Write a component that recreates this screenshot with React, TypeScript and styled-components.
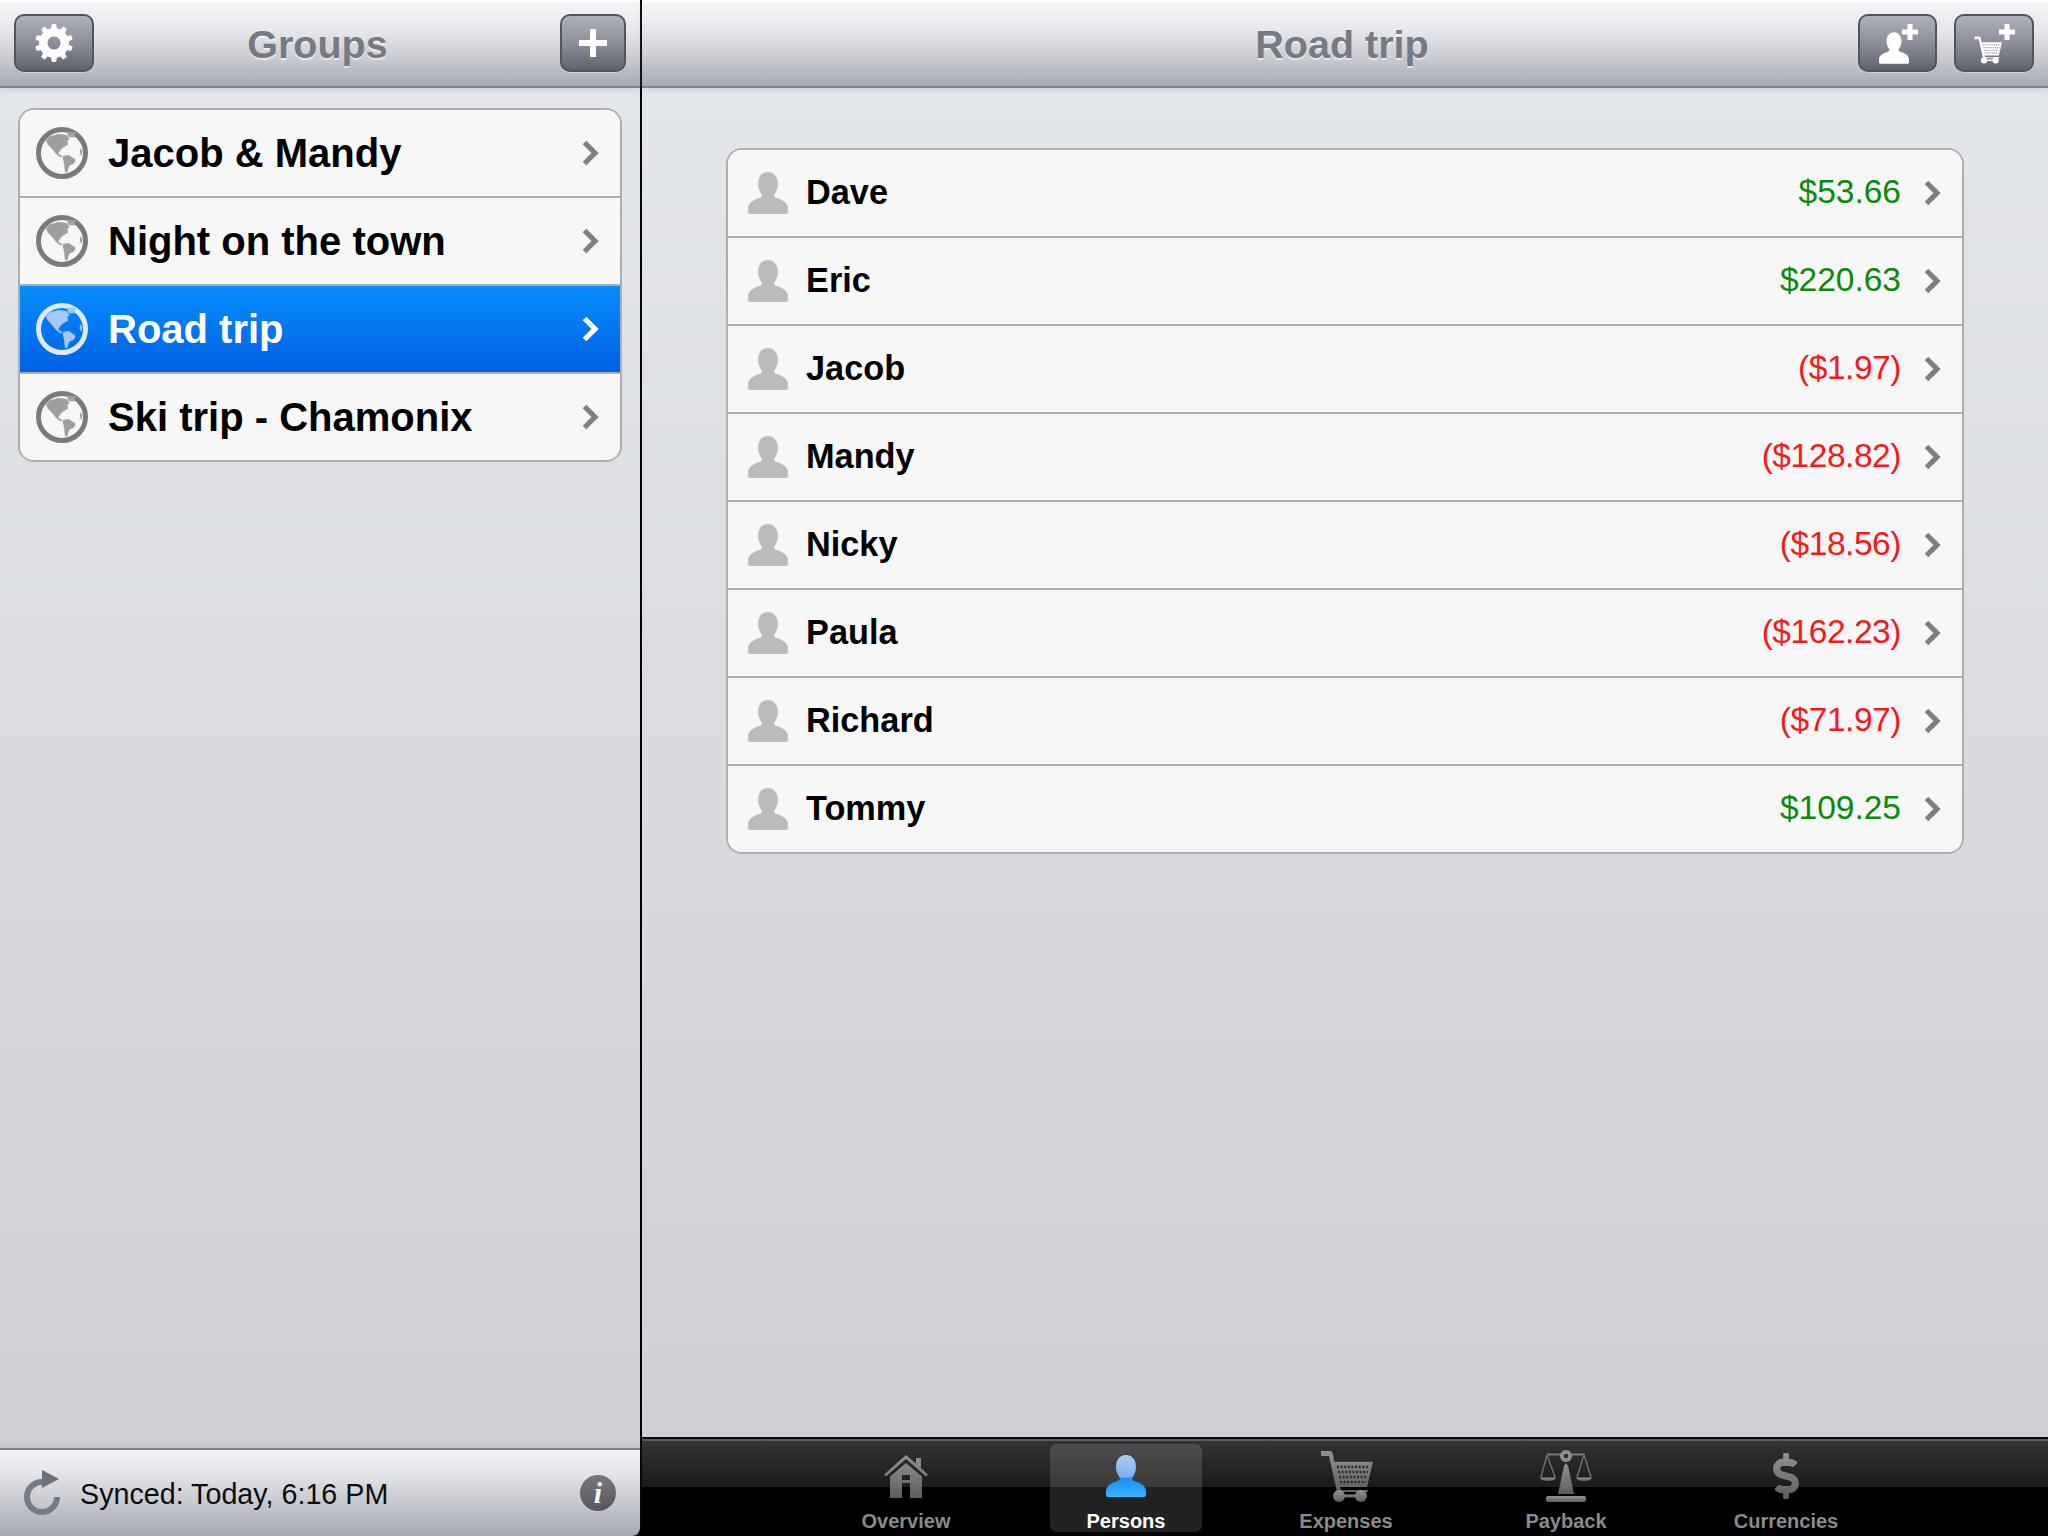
import { FC, ReactNode } from "react";
import styled, { createGlobalStyle } from "styled-components";
import { FaDollarSign } from "react-icons/fa";

const GlobalStyle = createGlobalStyle`
  html, body {
    margin: 0;
    padding: 0;
    background: #000;
  }
  * {
    box-sizing: border-box;
  }
`;

const groups = ["Jacob & Mandy", "Night on the town", "Road trip", "Ski trip - Chamonix"];

const persons = [
  { name: "Dave", amount: "$53.66", owes: false },
  { name: "Eric", amount: "$220.63", owes: false },
  { name: "Jacob", amount: "($1.97)", owes: true },
  { name: "Mandy", amount: "($128.82)", owes: true },
  { name: "Nicky", amount: "($18.56)", owes: true },
  { name: "Paula", amount: "($162.23)", owes: true },
  { name: "Richard", amount: "($71.97)", owes: true },
  { name: "Tommy", amount: "$109.25", owes: false },
];

const personPath =
  "M20 0C27 0 30 6 30 12C30 17 28 20 26 23C26 25 28 26 31 27C37 29 40 32 40 37V40Q40 42 38 42H2Q0 42 0 40V37C0 32 3 29 9 27C12 26 14 25 14 23C12 20 10 17 10 12C10 6 13 0 20 0Z";

// gear outline, ten teeth round a punched hole
const gearPath = (() => {
  const teeth = 10;
  const pts: string[] = [];
  for (let i = 0; i < teeth; i++) {
    const a = (i / teeth) * Math.PI * 2;
    const w = Math.PI / teeth;
    [
      [15, a - w * 0.62],
      [19, a - w * 0.36],
      [19, a + w * 0.36],
      [15, a + w * 0.62],
    ].forEach(([r, t]) => {
      pts.push(`${(19 + r * Math.sin(t)).toFixed(2)} ${(19 - r * Math.cos(t)).toFixed(2)}`);
    });
  }
  return `M${pts.join("L")}ZM19 12.5a6.5 6.5 0 1 0 0.01 0Z`;
})();

const Screen = styled.div`
  position: relative;
  display: flex;
  width: 2048px;
  height: 1536px;
  overflow: hidden;
  background: #000;
  font-family: "Liberation Sans", Arial, sans-serif;
  -webkit-font-smoothing: antialiased;
`;

const Sidebar = styled.aside`
  display: flex;
  flex-direction: column;
  width: 640px;
  height: 100%;
  flex: none;
`;

const Divider = styled.div`
  width: 2px;
  flex: none;
  background: #000;
`;

const Notch = styled.div`
  position: absolute;
  top: 0;
  left: 637px;
  border-left: 4px solid transparent;
  border-right: 4px solid transparent;
  border-top: 4px solid #000;
`;

const Main = styled.main`
  display: flex;
  flex-direction: column;
  flex: 1;
  height: 100%;
`;

const NavBar = styled.header<{ $left: number }>`
  position: relative;
  z-index: 1;
  display: grid;
  grid-template-columns: 1fr auto 1fr;
  align-items: center;
  height: 88px;
  flex: none;
  padding: 12px 14px 14px ${(p) => p.$left}px;
  border-top: 2px solid #fff;
  border-bottom: 2px solid #7c8090;
  background: linear-gradient(#f5f6f8, #e6e7eb 35%, #c6c8cf 70%, #a7aab5);
  box-shadow: 0 2px 5px rgba(130, 135, 150, 0.22);
`;

const NavTitle = styled.h1<{ $pull?: number }>`
  margin: 2px ${(p) => p.$pull ?? 0}px 0 0;
  font-size: 39.5px;
  line-height: 44px;
  font-weight: 700;
  color: #757a84;
  text-shadow: 0 2px 0 rgba(255, 255, 255, 0.55);
`;

const ButtonGroup = styled.div<{ $end?: boolean }>`
  display: flex;
  gap: 17px;
  justify-content: ${(p) => (p.$end ? "flex-end" : "flex-start")};
`;

const NavButton = styled.button<{ $width: number }>`
  position: relative;
  display: flex;
  align-items: center;
  justify-content: center;
  width: ${(p) => p.$width}px;
  height: 58px;
  padding: 0;
  border: 2px solid #52555e;
  border-radius: 10px;
  background: linear-gradient(#aeb1ba, #8c8f99 50%, #5f636e);
  box-shadow: 0 1px 0 rgba(255, 255, 255, 0.35);
`;

const ButtonGlyph = styled.span<{ $right: number; $top: number }>`
  display: flex;
  margin: ${(p) => p.$top}px ${(p) => p.$right}px 0 0;
`;

const CornerPlus = styled.svg`
  position: absolute;
  top: 8px;
  right: 17px;
`;

const PaneBody = styled.section<{ $padding: string }>`
  flex: 1;
  min-height: 0;
  padding: ${(p) => p.$padding};
  background: linear-gradient(#e3e6eb, #cfd0d5);
`;

const List = styled.ul`
  margin: 0;
  padding: 0;
  list-style: none;
  overflow: hidden;
  border: 2px solid #aeaeae;
  border-radius: 16px;
  background: #f7f7f7;
`;

const Row = styled.li<{ $selected?: boolean; $gap: number; $pad: number }>`
  display: flex;
  align-items: center;
  gap: ${(p) => p.$gap}px;
  height: 88px;
  padding: 0 21px 0 ${(p) => p.$pad}px;
  border-top: 2px solid #aeaeae;
  color: ${(p) => (p.$selected ? "#fff" : "#000")};
  background: ${(p) => (p.$selected ? "linear-gradient(#058df9, #0160e6)" : "#f7f7f7")};

  &:first-child {
    height: 86px;
    border-top: 0;
  }
`;

const GroupName = styled.span`
  flex: 1;
  font-size: 40px;
  line-height: 46px;
  font-weight: 700;
`;

const PersonName = styled.span`
  flex: 1;
  font-size: 34.3px;
  line-height: 40px;
  font-weight: 700;
  margin-top: -3px;
`;

const Amount = styled.span<{ $owes: boolean }>`
  margin-right: 5px;
  font-size: 33.5px;
  line-height: 40px;
  margin-top: -2px;
  letter-spacing: ${(p) => (p.$owes ? "-0.45px" : "0")};
  color: ${(p) => (p.$owes ? "#f5181c" : "#0a8a0a")};
`;

const SyncBar = styled.footer`
  position: relative;
  display: flex;
  align-items: center;
  gap: 20px;
  height: 88px;
  flex: none;
  padding: 0 24px;
  border-top: 2px solid #797d8e;
  border-bottom-right-radius: 8px;
  background: linear-gradient(#f1f2f6, #e2e3e8 30%, #a6a9b4);
  box-shadow: 0 -3px 4px rgba(120, 125, 140, 0.18);
`;

const SyncText = styled.span`
  flex: 1;
  font-size: 28.7px;
  line-height: 36px;
  margin-top: 2px;
  color: #0c0c0c;
`;

const InfoBadge = styled.span`
  display: flex;
  align-items: center;
  justify-content: center;
  width: 36px;
  height: 36px;
  border-radius: 50%;
  background: linear-gradient(#77797e, #55575c);
  color: #f4f4f4;
  font-family: "Liberation Serif", "Times New Roman", serif;
  font-style: italic;
  font-weight: 700;
  font-size: 30px;
  line-height: 36px;
`;

const TabBar = styled.nav`
  display: flex;
  justify-content: center;
  gap: 68px;
  height: 99px;
  flex: none;
  padding: 3px 0 0 2px;
  border-top: 2px solid #0b0b0b;
  background: linear-gradient(#5c5c5c 0, #5c5c5c 2px, #333 2px, #1b1b1b 48px, #000 48px);
`;

const Tab = styled.div<{ $active?: boolean }>`
  display: flex;
  flex-direction: column;
  align-items: center;
  width: 152px;
  height: 88px;
  margin-top: 2px;
  border-radius: 7px;
  background: ${(p) => (p.$active ? "rgba(255, 255, 255, 0.135)" : "transparent")};
  color: ${(p) => (p.$active ? "#fff" : "#8a8a8a")};
`;

const TabIconSlot = styled.div`
  display: flex;
  align-items: center;
  justify-content: center;
  height: 64px;
  margin-bottom: 2px;
`;

const TabLabel = styled.span`
  font-size: 20px;
  line-height: 22px;
  font-weight: 700;
  white-space: nowrap;
`;

const HiddenDefs = styled.svg`
  position: absolute;
  width: 0;
  height: 0;
`;

const Chevron: FC<{ color: string }> = ({ color }) => (
  <svg width="17" height="26" viewBox="0 0 17 26">
    <polyline points="2.5,2.5 13,13 2.5,23.5" fill="none" stroke={color} strokeWidth="5.2" />
  </svg>
);

const Globe: FC<{ selected?: boolean }> = ({ selected }) => {
  const ring = selected ? "#dfe8f5" : "#7a7b7f";
  const land = selected ? "#a3caf6" : "#9e9e9e";
  return (
    <svg width="52" height="52" viewBox="0 0 52 52" style={{ flex: "none" }}>
      <circle cx="26" cy="26" r="23.5" fill="none" stroke={ring} strokeWidth="5" />
      <g fill={land} stroke={land} strokeWidth="0.5" strokeLinejoin="round">
        <polygon points="10,13.3 14.3,9.3 22.7,7.3 31,8.3 33.3,11.7 31,14 32,17.3 27.7,20 24.3,22.7 22,26.7 26,29.3 24.3,30 20,26.7 16,21.7 12,17.3" />
        <polygon points="31,5 39.3,5 38.7,10 33.3,10" />
        <polygon points="26.7,29.3 32.7,28.3 39.3,32.7 37.7,36.7 33.3,38.3 31,45 29.3,45 28.3,36.7" />
        <polygon points="44.3,21.7 46,23.3 45.3,28.3 44,26" />
      </g>
    </svg>
  );
};

const PersonGlyph: FC<{ fill: string; width?: number; height?: number }> = ({ fill, width = 40, height = 42 }) => (
  <svg width={width} height={height} viewBox="0 0 40 42" style={{ flex: "none" }}>
    <path d={personPath} fill={fill} />
  </svg>
);

const PlusGlyph: FC<{ size: number; bar: number }> = ({ size, bar }) => {
  const a = (size - bar) / 2;
  return <path d={`M${a} 0h${bar}v${a}h${a}v${bar}h${-a}v${a}h${-bar}v${-a}h${-a}v${-bar}h${a}Z`} fill="#fff" />;
};

const CartGlyph: FC<{ body: string; mesh: string; width: number; height: number }> = ({ body, mesh, width, height }) => (
  <svg width={width} height={height} viewBox="0 0 53 51">
    <path d="M1 0H10Q12 0 13 3L14 10.7L53 10.7L47 36H20L21 39H48V41H17L9 5H1Z" fill={body} />
    <g stroke={mesh} strokeWidth="2.4" strokeDasharray="2 1.6">
      <line x1="17" y1="16" x2="49" y2="16" />
      <line x1="18" y1="21" x2="48" y2="21" />
      <line x1="19" y1="26" x2="47" y2="26" />
      <line x1="20" y1="31" x2="46" y2="31" />
    </g>
    <rect x="19" y="43.5" width="22" height="3" fill={body} />
    <circle cx="19" cy="45" r="6" fill={body} />
    <circle cx="41" cy="45" r="6" fill={body} />
  </svg>
);

const HomeIcon = () => (
  <svg width="44" height="43" viewBox="0 0 44 43">
    <path
      fill="url(#tabGrey)"
      fillRule="evenodd"
      d="M22 0L32 8.5V3H37V13L44 19.5L42 21.5L22 4L2 21.5L0 19.5ZM22 8L38 21.5V43H26V28H18V43H6V21.5ZM18 20H26V25H18Z"
    />
  </svg>
);

const ScalesIcon = () => (
  <svg width="52" height="52" viewBox="0 0 52 52">
    <g fill="url(#tabGrey)">
      <rect x="7" y="3.6" width="38" height="2" />
      <path d="M26 13L28 16L34 44H18L24 16Z" />
      <path d="M0 27.5H16Q15 31 8 31Q1 31 0 27.5ZM36 27.5H52Q51 31 44 31Q37 31 36 27.5Z" />
      <rect x="6" y="46" width="40" height="6" rx="2" />
    </g>
    <path d="M7 5L1 27M7 5L15 27M44 5L37 27M44 5L51 27" fill="none" stroke="#707070" strokeWidth="1.4" />
    <circle cx="26" cy="6" r="6" fill="#8e8e8e" />
    <circle cx="26" cy="6" r="2.2" fill="#2a2a2a" />
  </svg>
);

const tabs: { label: string; icon: ReactNode; active?: boolean }[] = [
  { label: "Overview", icon: <HomeIcon /> },
  {
    label: "Persons",
    active: true,
    icon: <PersonGlyph fill="url(#tabBlue)" />,
  },
  { label: "Expenses", icon: <CartGlyph body="url(#tabGrey)" mesh="#2b2b2b" width={53} height={51} /> },
  { label: "Payback", icon: <ScalesIcon /> },
  { label: "Currencies", icon: <FaDollarSign size={46} fill="url(#tabGrey)" /> },
];

export default function App() {
  return (
    <>
      <GlobalStyle />
      <Screen>
        <HiddenDefs>
          <defs>
            <linearGradient id="tabGrey" x1="0" y1="0" x2="0" y2="1">
              <stop offset="0" stopColor="#929292" />
              <stop offset="1" stopColor="#5e5e5e" />
            </linearGradient>
            <linearGradient id="tabBlue" x1="0" y1="0" x2="0" y2="1">
              <stop offset="0" stopColor="#abcdf5" />
              <stop offset="0.52" stopColor="#7cafee" />
              <stop offset="0.56" stopColor="#1c8ef5" />
              <stop offset="1" stopColor="#36b6ff" />
            </linearGradient>
          </defs>
        </HiddenDefs>

        <Sidebar>
          <NavBar $left={14}>
            <ButtonGroup>
              <NavButton $width={80}>
                <svg width="38" height="38" viewBox="0 0 38 38">
                  <path d={gearPath} fill="#fff" fillRule="evenodd" />
                </svg>
              </NavButton>
            </ButtonGroup>
            <NavTitle $pull={5}>Groups</NavTitle>
            <ButtonGroup $end>
              <NavButton $width={66}>
                <svg width="28" height="28" viewBox="0 0 28 28">
                  <PlusGlyph size={28} bar={6} />
                </svg>
              </NavButton>
            </ButtonGroup>
          </NavBar>
          <PaneBody $padding="20px 18px">
            <List>
              {groups.map((g) => {
                const selected = g === "Road trip";
                return (
                  <Row key={g} $selected={selected} $gap={20} $pad={16}>
                    <Globe selected={selected} />
                    <GroupName>{g}</GroupName>
                    <Chevron color={selected ? "#fff" : "#7f7f7f"} />
                  </Row>
                );
              })}
            </List>
          </PaneBody>
          <SyncBar>
            <svg width="36" height="46" viewBox="0 0 36 46" style={{ flex: "none" }}>
              <path d="M18 12A15 15 0 1 0 33 27" fill="none" stroke="#767a83" strokeWidth="6" />
              <path d="M18 0L35 9L18 18Z" fill="#6c7079" />
            </svg>
            <SyncText>Synced: Today, 6:16 PM</SyncText>
            <InfoBadge>i</InfoBadge>
          </SyncBar>
        </Sidebar>

        <Divider />
        <Notch />

        <Main>
          <NavBar $left={8}>
            <span />
            <NavTitle>Road trip</NavTitle>
            <ButtonGroup $end>
              <NavButton $width={79}>
                <ButtonGlyph $right={8} $top={10}>
                  <PersonGlyph fill="#fff" width={30} height={32} />
                </ButtonGlyph>
                <CornerPlus width="16" height="16" viewBox="0 0 16 16">
                  <PlusGlyph size={16} bar={5} />
                </CornerPlus>
              </NavButton>
              <NavButton $width={80}>
                <ButtonGlyph $right={12} $top={14}>
                  <CartGlyph body="#fff" mesh="#9a9ca4" width={28} height={28} />
                </ButtonGlyph>
                <CornerPlus width="16" height="16" viewBox="0 0 16 16">
                  <PlusGlyph size={16} bar={5} />
                </CornerPlus>
              </NavButton>
            </ButtonGroup>
          </NavBar>
          <PaneBody $padding="60px 84px">
            <List>
              {persons.map((p) => (
                <Row key={p.name} $gap={18} $pad={20}>
                  <PersonGlyph fill="#bcbcbc" />
                  <PersonName>{p.name}</PersonName>
                  <Amount $owes={p.owes}>{p.amount}</Amount>
                  <Chevron color="#7f7f7f" />
                </Row>
              ))}
            </List>
          </PaneBody>
          <TabBar>
            {tabs.map((t) => (
              <Tab key={t.label} $active={t.active}>
                <TabIconSlot>{t.icon}</TabIconSlot>
                <TabLabel>{t.label}</TabLabel>
              </Tab>
            ))}
          </TabBar>
        </Main>
      </Screen>
    </>
  );
}
